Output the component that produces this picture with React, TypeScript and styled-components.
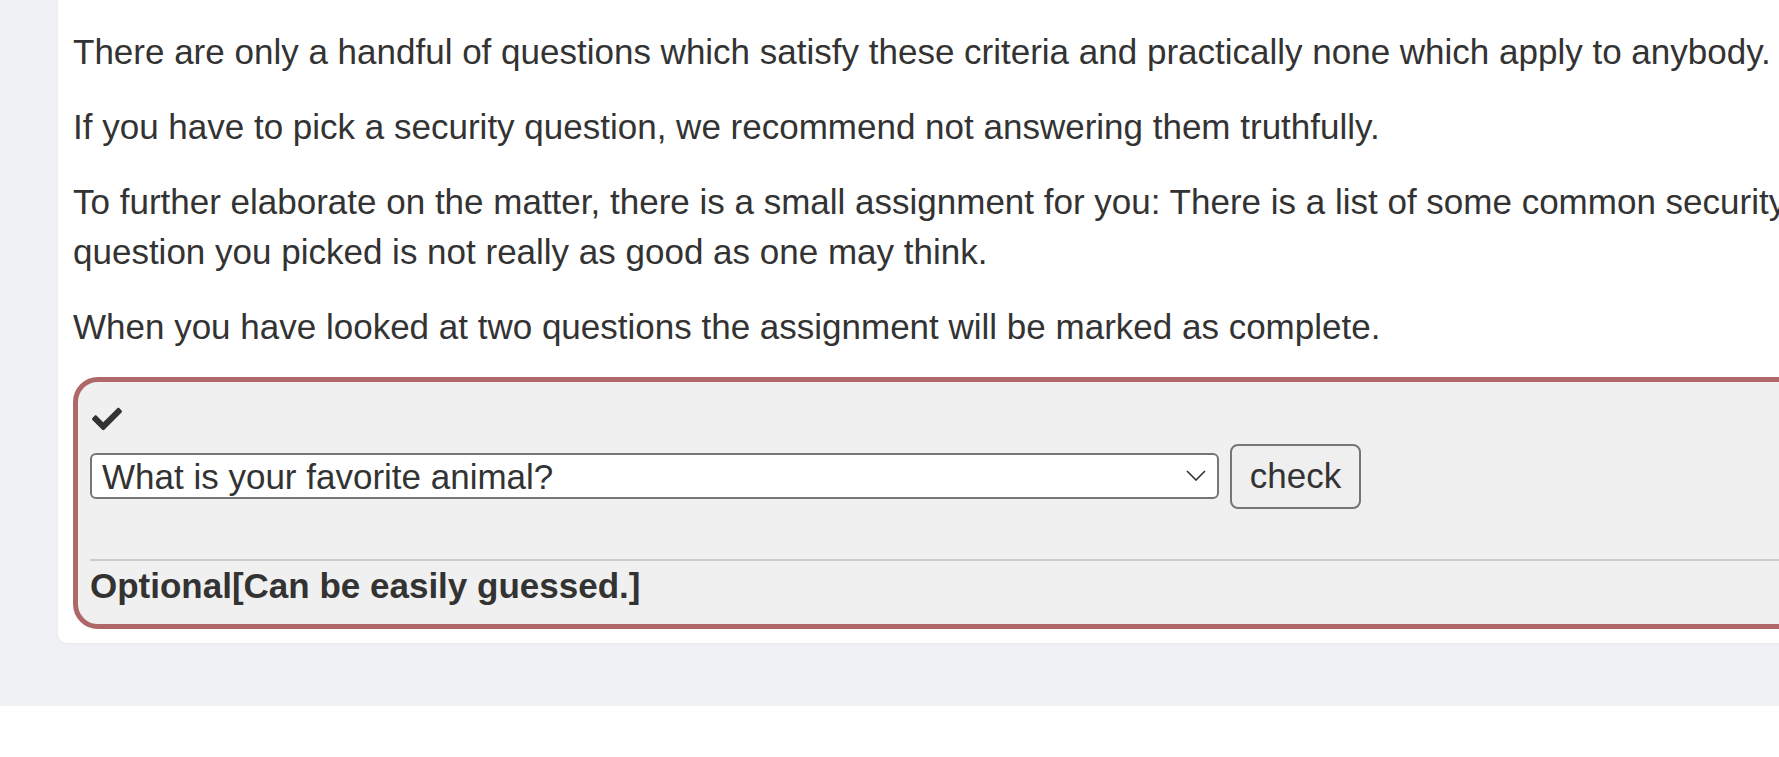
import React from "react";
import styled, { createGlobalStyle } from "styled-components";

const GlobalStyle = createGlobalStyle`
  html, body {
    margin: 0;
    padding: 0;
    background: #ffffff;
    overflow: hidden;
  }
  body {
    font-family: "Liberation Sans", Arial, Helvetica, sans-serif;
    color: #333333;
  }
  * { box-sizing: border-box; }
`;

const Page = styled.div`
  width: 3400px;
  background: #f0f1f5;
  padding: 0 0 63px 58px;
`;

const Card = styled.div`
  background: #ffffff;
  border-radius: 0 0 9px 9px;
  padding: 27px 15px 14px;
  box-shadow: 0 1px 3px rgba(0, 0, 0, 0.05);
`;

const Paragraph = styled.p`
  margin: 0 0 25px;
  font-size: 35px;
  line-height: 50px;
`;

const AttackContainer = styled.div`
  border: 5px solid #ae6868;
  border-radius: 25px;
  background: #f0f0f0;
  padding: 12px 12px 13px 12px;
`;

const SuccessRow = styled.div`
  height: 50px;
  display: flex;
  align-items: center;
  color: #333333;
`;

const CheckIcon = styled.svg`
  width: 30px;
  height: 30px;
  margin-left: 2px;
  fill: currentColor;
`;

const FormRow = styled.form`
  display: flex;
  align-items: center;
  height: 64px;
  margin: 0;
`;

const SelectWrap = styled.div`
  position: relative;
  width: 1129px;
  height: 46px;
`;

const Select = styled.select`
  appearance: none;
  -webkit-appearance: none;
  width: 100%;
  height: 100%;
  margin: 0;
  padding: 0 50px 0 10px;
  font-family: inherit;
  font-size: 35px;
  color: #333333;
  background: #ffffff;
  border: 2px solid #767676;
  border-radius: 6px;
  outline: none;
`;

const Chevron = styled.svg`
  position: absolute;
  right: 13px;
  top: 17px;
  width: 20px;
  height: 11px;
  pointer-events: none;
`;

const CheckButton = styled.button`
  margin-left: 11px;
  width: 131px;
  height: 65px;
  padding: 0;
  font-family: inherit;
  font-size: 35px;
  color: #333333;
  background: #efefef;
  border: 2px solid #767676;
  border-radius: 8px;
`;

const Divider = styled.div`
  margin-top: 51px;
  height: 2px;
  background: #cccccc;
`;

const Feedback = styled.div`
  font-size: 35px;
  line-height: 50px;
  font-weight: bold;
  color: #333333;
`;

export default function App() {
  return (
    <>
      <GlobalStyle />
      <Page>
        <Card>
          <Paragraph>
            There are only a handful of questions which satisfy these criteria and practically none which apply to anybody.
          </Paragraph>
          <Paragraph>
            If you have to pick a security question, we recommend not answering them truthfully.
          </Paragraph>
          <Paragraph>
            To further elaborate on the matter, there is a small assignment for you: There is a list of some common security questions down below. If you choose one, it will show you why the
            <br />
            question you picked is not really as good as one may think.
          </Paragraph>
          <Paragraph>
            When you have looked at two questions the assignment will be marked as complete.
          </Paragraph>
          <AttackContainer>
            <SuccessRow>
              <CheckIcon viewBox="0 0 512 512" aria-hidden="true">
                <path d="M173.898 439.404l-166.4-166.4c-9.997-9.997-9.997-26.206 0-36.204l36.203-36.204c9.997-9.998 26.207-9.998 36.204 0L192 312.69 432.095 72.596c9.997-9.997 26.207-9.997 36.204 0l36.203 36.204c9.997 9.997 9.997 26.206 0 36.204l-294.4 294.401c-9.998 9.997-26.207 9.997-36.204-.001z" />
              </CheckIcon>
            </SuccessRow>
            <FormRow onSubmit={(e) => e.preventDefault()}>
              <SelectWrap>
                <Select defaultValue="animal">
                  <option value="animal">What is your favorite animal?</option>
                  <option value="school">In what year was your mother born?</option>
                  <option value="teacher">What was the name of your first teacher?</option>
                </Select>
                <Chevron viewBox="0 0 20 11" aria-hidden="true">
                  <path d="M1 1 L10 10 L19 1" fill="none" stroke="#333333" strokeWidth="1.6" />
                </Chevron>
              </SelectWrap>
              <CheckButton type="submit">check</CheckButton>
            </FormRow>
            <Divider />
            <Feedback>Optional[Can be easily guessed.]</Feedback>
          </AttackContainer>
        </Card>
      </Page>
    </>
  );
}
